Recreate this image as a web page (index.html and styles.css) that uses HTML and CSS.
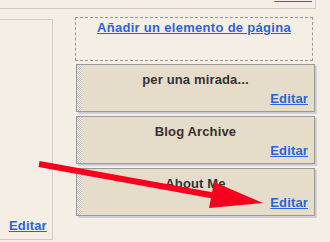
FILE: index.html
```html
<!DOCTYPE html>
<html lang="es">

<head>
    <meta charset="UTF-8">
    <meta name="viewport" content="width=device-width, initial-scale=1.0">
    <title>Diseño</title>
    <link rel="stylesheet" href="styles.css">
</head>

<body>
    <div class="top"><a href="#">Editar</a></div>
    <div class="layout">
        <div class="main"><a href="#">Editar</a></div>
        <div class="sidebar">
            <div class="add"><a href="#">Añadir un elemento de página</a></div>
            <div class="widget">
                <h3>per una mirada...</h3>
                <div class="edit"><a href="#">Editar</a></div>
            </div>
            <div class="widget">
                <h3>Blog Archive</h3>
                <div class="edit"><a href="#">Editar</a></div>
            </div>
            <div class="widget">
                <h3>About Me</h3>
                <div class="edit"><a href="#">Editar</a></div>
            </div>
        </div>
    </div>
    <!-- flecha roja encima -->
    <svg class="arrow" width="330" height="242" viewBox="0 0 330 242">
        <line x1="39" y1="164" x2="216" y2="196" stroke="#f7001d" stroke-width="6" />
        <polygon points="214,182 263,203 209,208" fill="#f7001d" />
    </svg>
</body>

</html>
```

FILE: styles.css
```css
* {
    box-sizing: border-box;
}

html,
body {
    margin: 0;
    padding: 0;
    width: 100%;
    height: 100%;
    overflow: hidden;
    background-color: #f5eee4;
    font-family: "Liberation Sans", Arial, sans-serif;
    font-size: 13px;
    font-weight: bold;
    line-height: 15px;
    letter-spacing: 0.15px;
}

a {
    color: #2f62d9;
    text-decoration: underline;
}

.top {
    margin-left: -10px;
    width: 326px;
    height: 9px;
    border: 1px solid #cfcbc6;
    border-top: none;
    display: flex;
    justify-content: flex-end;
    align-items: flex-end;
    overflow: hidden;
    padding-right: 3px;
}

.top a {
    display: block;
    margin-bottom: 5px;
}

.layout {
    display: flex;
    align-items: flex-start;
    margin-top: 8px;
}

.main {
    margin-left: -10px;
    margin-top: 2px;
    width: 63px;
    height: 221px;
    border: 1px solid #cfcbc6;
    display: flex;
    align-items: flex-end;
    padding: 0 0 6px 18px;
}

.sidebar {
    margin-left: 22px;
    display: flex;
    flex-direction: column;
}

.add {
    width: 238px;
    height: 44px;
    border: 1px dashed #999;
    text-align: center;
    padding-top: 2px;
    margin-bottom: -1px;
    letter-spacing: 0.3px;
}

.widget {
    margin-left: 1px;
    margin-top: 4px;
    width: 239px;
    height: 48px;
    border: 1px solid #999;
    box-shadow: 2px 2px 0 #cfcdd8;
    background-color: #e6dcca;
    background-image: linear-gradient(to right, transparent 5px, #e6dcca 5px),
        repeating-conic-gradient(#fff 0 25%, #c4beb6 0 50%);
    background-size: auto, 2px 2px;
}

.widget h3 {
    margin: 0;
    padding-top: 7px;
    font-size: 13px;
    line-height: 15px;
    text-align: center;
    color: #333;
}

.edit {
    margin-top: 4px;
    text-align: right;
    padding-right: 6px;
}

.arrow {
    position: absolute;
    top: 0;
    left: 0;
    pointer-events: none;
}
```
